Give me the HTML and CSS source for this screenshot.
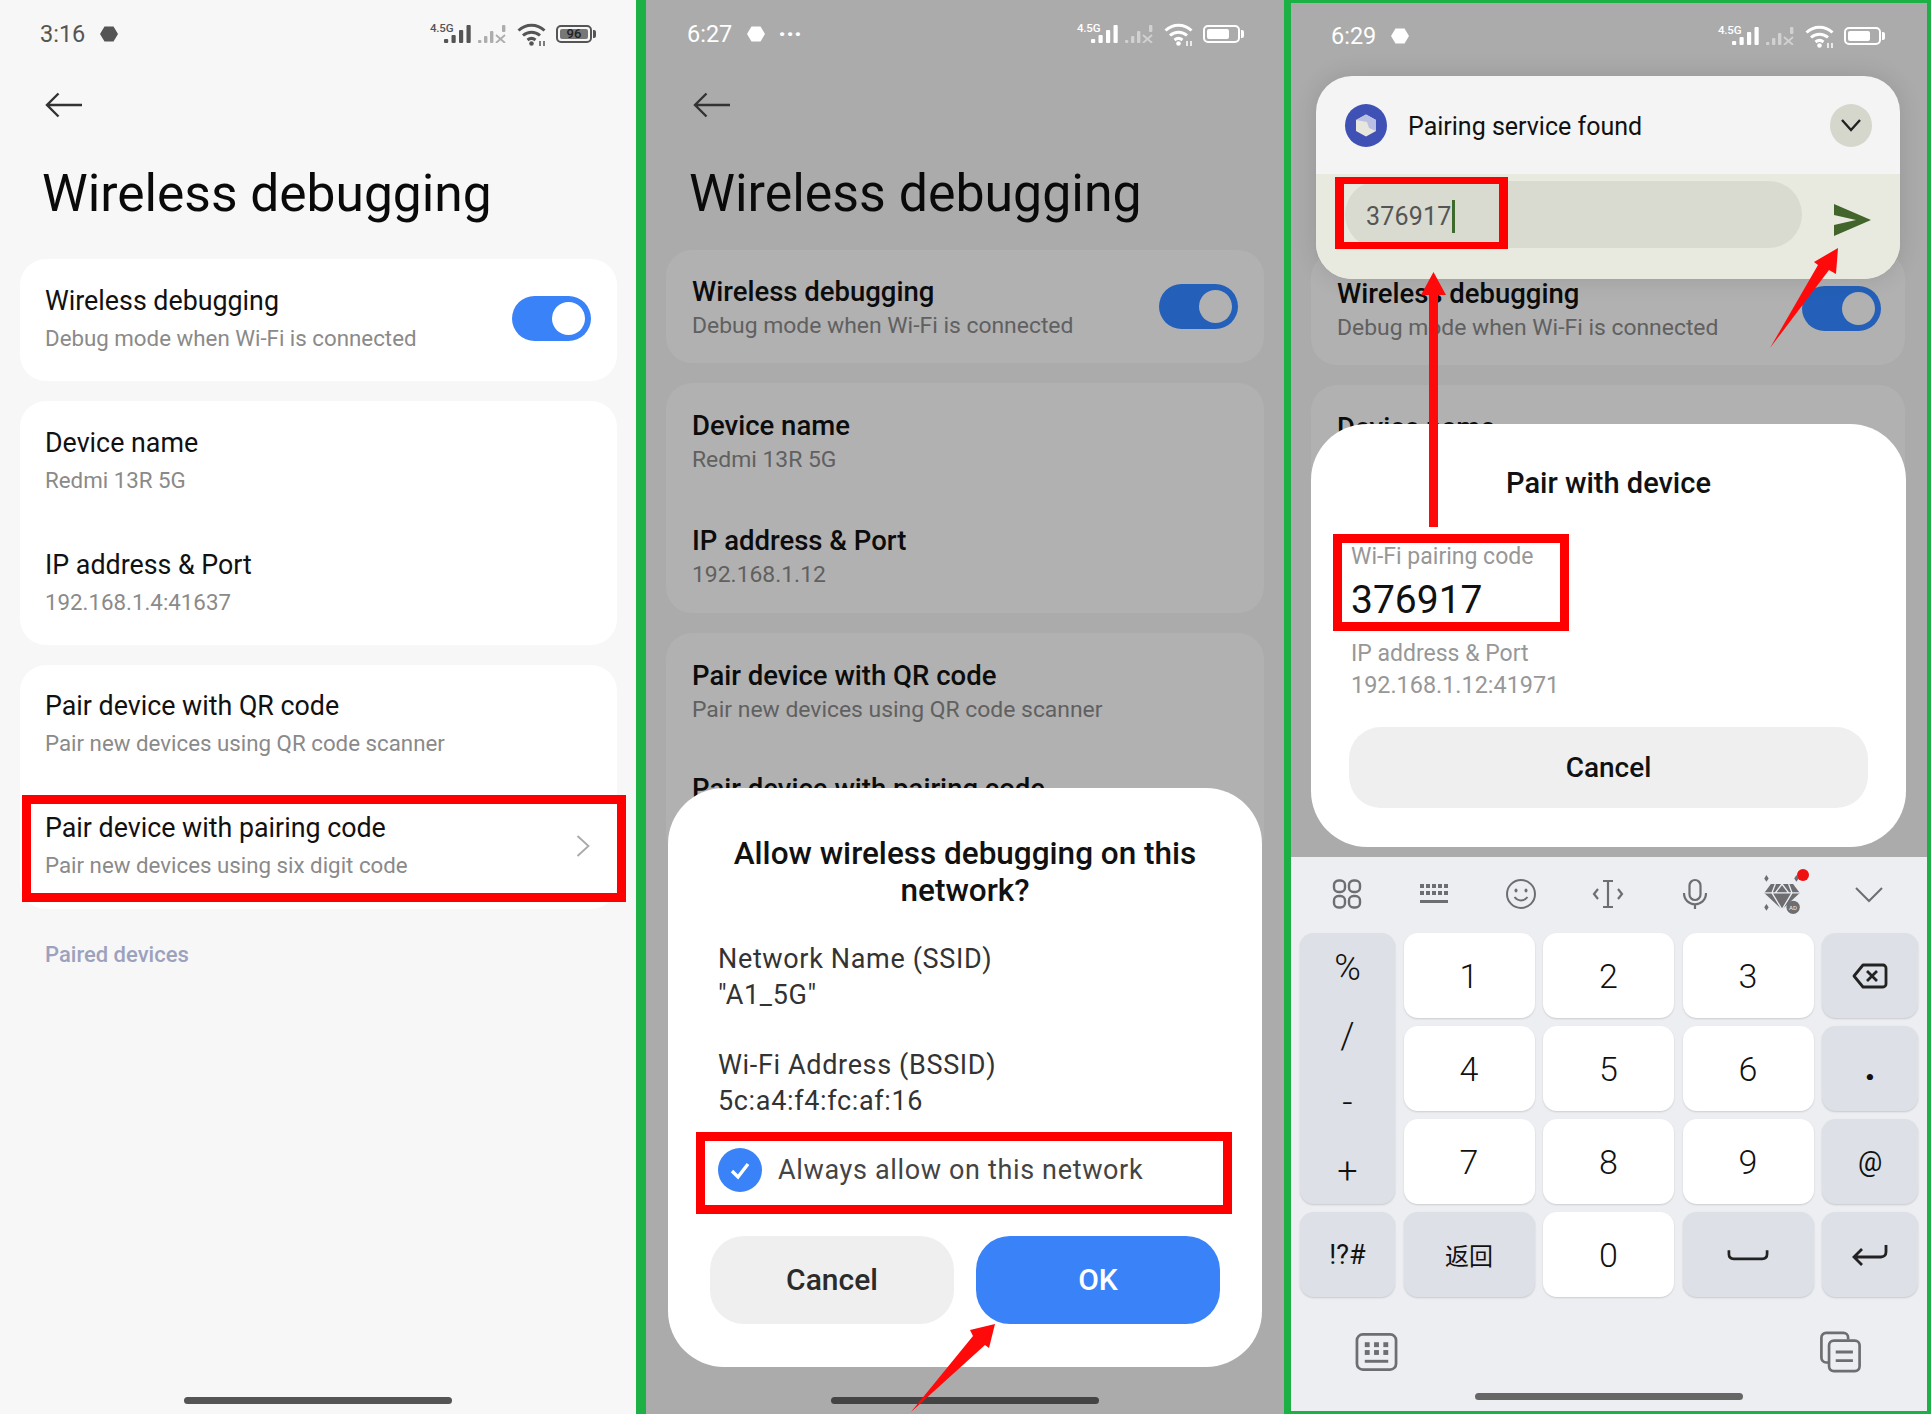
FILE: index.html
```html
<!DOCTYPE html>
<html lang="en">
<head>
<meta charset="utf-8">
<title>Wireless debugging</title>
<link rel="stylesheet" href="styles.css">
</head>
<body>
<svg class="defs" aria-hidden="true">
  <defs>
    <symbol id="sig" viewBox="0 0 28 18"><rect x="0" y="14" width="4.200" height="4" rx="1"/><rect x="7.500" y="10" width="4.200" height="8" rx="1"/><rect x="15" y="5" width="4.200" height="13" rx="1"/><rect x="22.500" y="0" width="4.200" height="18" rx="1"/></symbol>
    <symbol id="sigx" viewBox="0 0 29 18"><rect x="0" y="15" width="3.400" height="3" rx="1"/><rect x="6" y="11" width="3.400" height="7" rx="1"/><rect x="12" y="6" width="3.400" height="12" rx="1"/><rect x="24" y="0" width="3.400" height="7" rx="1"/><path d="M18 10l9 8M27 10l-9 8" fill="none" stroke="currentColor" stroke-width="1.800"/></symbol>
    <symbol id="wifi" viewBox="0 0 30 23"><g fill="none" stroke="currentColor" stroke-width="3"><path d="M1.500 7.500C9 .5 20 .5 27.500 7.500"/><path d="M6 12.500c5-4.500 12-4.500 17 0"/><path d="M10.500 17c2.500-2 5.500-2 8 0"/></g><circle cx="14.500" cy="20.500" r="2.300"/><path d="M23 23v-5M27 23v-5" stroke="currentColor" stroke-width="1.500"/></symbol>
    <symbol id="hex" viewBox="0 0 18 16"><path d="M4.500 .5h9L18 8l-4.500 7.500h-9L0 8z"/></symbol>
    <symbol id="back" viewBox="0 0 38 26"><path d="M37 13H2M13.500 1.500L2 13l11.500 11.500" fill="none" stroke="currentColor" stroke-width="2.400"/></symbol>
  </defs>
</svg>

<main class="screens">
  <!-- Screen 1 -->
  <section class="phone phone-light">
    <header class="status">
      <span class="clock">3:16</span>
      <svg class="hex"><use href="#hex"/></svg>
      <div class="net">
        <span class="g">4.5G</span>
        <svg class="sig"><use href="#sig"/></svg>
        <svg class="sigx"><use href="#sigx"/></svg>
        <svg class="wifi"><use href="#wifi"/></svg>
        <span class="batt batt-full"><span class="batt-level">96</span></span>
      </div>
    </header>
    <svg class="back"><use href="#back"/></svg>
    <h1 class="title">Wireless debugging</h1>
    <div class="cards">
      <div class="card">
        <div class="row">
          <div class="row-text"><div class="row-title">Wireless debugging</div><div class="row-sub">Debug mode when Wi-Fi is connected</div></div>
          <span class="toggle"></span>
        </div>
      </div>
      <div class="card">
        <div class="row"><div class="row-text"><div class="row-title">Device name</div><div class="row-sub">Redmi 13R 5G</div></div></div>
        <div class="row"><div class="row-text"><div class="row-title">IP address &amp; Port</div><div class="row-sub">192.168.1.4:41637</div></div></div>
      </div>
      <div class="card card-short">
        <div class="row"><div class="row-text"><div class="row-title">Pair device with QR code</div><div class="row-sub">Pair new devices using QR code scanner</div></div></div>
        <div class="row">
          <div class="row-text"><div class="row-title">Pair device with pairing code</div><div class="row-sub">Pair new devices using six digit code</div></div>
          <svg class="chev" viewBox="0 0 14 22"><path d="M1.500 1L12.500 11 1.500 21" fill="none" stroke="#a9a9a9" stroke-width="1.800"/></svg>
        </div>
      </div>
    </div>
    <div class="paired">Paired devices</div>
    <div class="homebar"></div>
    <div class="redbox red-pair"></div>
  </section>

  <!-- Screen 2 -->
  <section class="phone phone-dim">
    <header class="status">
      <span class="clock">6:27</span>
      <svg class="hex"><use href="#hex"/></svg>
      <span class="dots">···</span>
      <div class="net">
        <span class="g">4.5G</span>
        <svg class="sig"><use href="#sig"/></svg>
        <svg class="sigx"><use href="#sigx"/></svg>
        <svg class="wifi"><use href="#wifi"/></svg>
        <span class="batt"><span class="batt-fill"></span></span>
      </div>
    </header>
    <svg class="back"><use href="#back"/></svg>
    <h1 class="title">Wireless debugging</h1>
    <div class="cards">
      <div class="card">
        <div class="row">
          <div class="row-text"><div class="row-title">Wireless debugging</div><div class="row-sub">Debug mode when Wi-Fi is connected</div></div>
          <span class="toggle"></span>
        </div>
      </div>
      <div class="card">
        <div class="row"><div class="row-text"><div class="row-title">Device name</div><div class="row-sub">Redmi 13R 5G</div></div></div>
        <div class="row"><div class="row-text"><div class="row-title">IP address &amp; Port</div><div class="row-sub">192.168.1.12</div></div></div>
      </div>
      <div class="card">
        <div class="row"><div class="row-text"><div class="row-title">Pair device with QR code</div><div class="row-sub">Pair new devices using QR code scanner</div></div></div>
        <div class="row row-clip"><div class="row-text"><div class="row-title">Pair device with pairing code</div><div class="row-sub">Pair new devices using six digit code</div></div></div>
      </div>
    </div>
    <div class="homebar"></div>

    <div class="dialog dialog-allow">
      <h2 class="dlg-title">Allow wireless debugging on this network?</h2>
      <div class="info">Network Name (SSID)<br>"A1_5G"</div>
      <div class="info info-next">Wi-Fi Address (BSSID)<br>5c:a4:f4:fc:af:16</div>
      <div class="always">
        <svg class="check" viewBox="0 0 44 44"><circle cx="22" cy="22" r="22" fill="#3a82f7"/><path d="M14 23l6 6 10-13" fill="none" stroke="#fff" stroke-width="3.400"/></svg>
        <span>Always allow on this network</span>
      </div>
      <div class="btns">
        <button class="btn">Cancel</button>
        <button class="btn btn-ok">OK</button>
      </div>
    </div>
    <div class="redbox red-always"></div>
    <svg class="arrow arrow-ok" viewBox="0 0 104 100"><polygon points="94,10 69,16 72,22 10,98 84,31 88,34"/></svg>
  </section>

  <!-- Screen 3 -->
  <section class="phone phone-dim phone-input">
    <div class="upper">
      <header class="status">
        <span class="clock">6:29</span>
        <svg class="hex"><use href="#hex"/></svg>
        <div class="net">
          <span class="g">4.5G</span>
          <svg class="sig"><use href="#sig"/></svg>
          <svg class="sigx"><use href="#sigx"/></svg>
          <svg class="wifi"><use href="#wifi"/></svg>
          <span class="batt"><span class="batt-fill"></span></span>
        </div>
      </header>
      <div class="cards">
        <div class="card">
          <div class="row">
            <div class="row-text"><div class="row-title">Wireless debugging</div><div class="row-sub">Debug mode when Wi-Fi is connected</div></div>
            <span class="toggle"></span>
          </div>
        </div>
        <div class="card">
          <div class="row"><div class="row-text"><div class="row-title">Device name</div><div class="row-sub">Redmi 13R 5G</div></div></div>
        </div>
      </div>
    </div>

    <div class="keyboard">
      <div class="kb-tools">
        <svg class="tool" viewBox="0 0 32 32"><g fill="none" stroke="#6e6e70" stroke-width="2.400"><rect x="3" y="2.500" width="11" height="11.500" rx="4.500"/><rect x="18" y="2.500" width="11" height="11.500" rx="4.500"/><rect x="3" y="18" width="11" height="11.500" rx="4.500"/><rect x="18" y="18" width="11" height="11.500" rx="4.500"/></g></svg>
        <svg class="tool" viewBox="0 0 32 32" fill="#6e6e70"><rect x="2" y="6" width="4" height="4"/><rect x="8" y="6" width="4" height="4"/><rect x="14" y="6" width="4" height="4"/><rect x="20" y="6" width="4" height="4"/><rect x="26" y="6" width="4" height="4"/><rect x="2" y="13" width="4" height="4"/><rect x="8" y="13" width="4" height="4"/><rect x="14" y="13" width="4" height="4"/><rect x="20" y="13" width="4" height="4"/><rect x="26" y="13" width="4" height="4"/><rect x="2" y="22" width="28" height="3"/></svg>
        <svg class="tool" viewBox="0 0 32 32"><circle cx="16" cy="16" r="14" fill="none" stroke="#6e6e70" stroke-width="2"/><ellipse cx="11" cy="12.500" rx="1.500" ry="2" fill="#6e6e70"/><ellipse cx="21" cy="12.500" rx="1.500" ry="2" fill="#6e6e70"/><path d="M9.500 19c3.500 4.500 9.500 4.500 13 0" fill="none" stroke="#6e6e70" stroke-width="2"/></svg>
        <svg class="tool" viewBox="0 0 32 32"><path d="M11 3h10M11 29h10M16 3v26M6 11l-4 5 4 5M26 11l4 5-4 5" fill="none" stroke="#6e6e70" stroke-width="2.200"/></svg>
        <svg class="tool" viewBox="0 0 32 32"><rect x="10.500" y="2" width="11" height="20" rx="5.500" fill="none" stroke="#6e6e70" stroke-width="2.200"/><path d="M5 15c0 15 22 15 22 0M16 26v5" fill="none" stroke="#6e6e70" stroke-width="2.200"/></svg>
        <span class="gem">
          <svg class="tool" viewBox="0 0 36 36"><path d="M8 9h20l6 8-16 15L2 17z" fill="#6e6e70"/><path d="M2 17h32M12 9l-3 8 9 15 9-15-3-8M18 9l-6 8M18 9l6 8" fill="none" stroke="#eceef2" stroke-width="1.200"/><path d="M4 1l2 3-2 3-2-3zM31 1l2 3-2 3-2-3zM4 27l2 3-2 3-2-3z" fill="#6e6e70"/><circle cx="28" cy="30" r="6" fill="#6e6e70"/><text x="28" y="32" font-size="5.500" text-anchor="middle" fill="#eceef2" font-family="Roboto, sans-serif">AD</text></svg>
          <span class="gem-dot"></span>
        </span>
        <svg class="tool" viewBox="0 0 32 32"><path d="M3 10l13 13 13-13" fill="none" stroke="#6e6e70" stroke-width="2"/></svg>
      </div>
      <div class="keys">
        <div class="key fn sym-col"><span>%</span><span>/</span><span>-</span><span>+</span></div>
        <div class="key">1</div><div class="key">2</div><div class="key">3</div>
        <div class="key fn"><svg class="ki ki-del" viewBox="0 0 36 26"><path d="M11 2h20a3 3 0 0 1 3 3v16a3 3 0 0 1-3 3H11L2 13z" fill="none" stroke="#222" stroke-width="2.800" stroke-linejoin="round"/><path d="M15 8l10 10M25 8L15 18" stroke="#222" stroke-width="2.800"/></svg></div>
        <div class="key">4</div><div class="key">5</div><div class="key">6</div>
        <div class="key fn fn-dot">.</div>
        <div class="key">7</div><div class="key">8</div><div class="key">9</div>
        <div class="key fn fn-small">@</div>
        <div class="key fn fn-small">!?#</div>
        <div class="key fn fn-cjk">返回</div>
        <div class="key">0</div>
        <div class="key fn"><svg class="ki ki-space" viewBox="0 0 44 14"><path d="M2 2v4c0 3 2 5 5 5h30c3 0 5-2 5-5V2" fill="none" stroke="#222" stroke-width="2.800"/></svg></div>
        <div class="key fn"><svg class="ki" viewBox="0 0 36 24"><path d="M34 2v7c0 3-2 5-5 5H3M10 6l-8 8 8 8" fill="none" stroke="#222" stroke-width="2.800"/></svg></div>
      </div>
      <div class="kb-bottom">
        <svg class="bottom-ic" viewBox="0 0 44 40"><rect x="2" y="2" width="40" height="36" rx="6" fill="none" stroke="#6e6e70" stroke-width="2.800"/><g fill="#6e6e70"><rect x="10" y="10" width="5" height="5"/><rect x="19.500" y="10" width="5" height="5"/><rect x="29" y="10" width="5" height="5"/><rect x="10" y="18" width="5" height="5"/><rect x="19.500" y="18" width="5" height="5"/><rect x="29" y="18" width="5" height="5"/><rect x="10" y="28" width="24" height="3"/></g></svg>
        <svg class="bottom-ic" viewBox="0 0 44 44"><path d="M9 33H7a5 5 0 0 1-5-5V7a5 5 0 0 1 5-5h18a5 5 0 0 1 5 5v2" fill="none" stroke="#6e6e70" stroke-width="2.800"/><rect x="10" y="10" width="32" height="32" rx="5" fill="none" stroke="#6e6e70" stroke-width="2.800"/><path d="M17 22h18M17 31h18" stroke="#6e6e70" stroke-width="3"/></svg>
      </div>
      <div class="homebar"></div>
    </div>

    <div class="notif">
      <div class="notif-head">
        <span class="notif-app"><svg viewBox="0 0 42 42"><path d="M21 10l10 5.500v11L21 32l-10-5.500v-11z" fill="#e7e7dd"/><path d="M21 10l10 5.500v11l-7-3-2-6-11-2z" fill="#b9c0e4"/></svg></span>
        <span class="notif-title">Pairing service found</span>
        <span class="notif-exp"><svg viewBox="0 0 24 16"><path d="M3 3l9 10 9-10" fill="none" stroke="#222" stroke-width="2.400"/></svg></span>
      </div>
      <div class="notif-body">
        <div class="pill"><span class="pill-text">376917</span><span class="caret"></span></div>
        <svg class="send" viewBox="0 0 37 32"><path d="M0 0l37 16L0 32V21l22-5L0 11z" fill="#41652b"/></svg>
      </div>
    </div>

    <div class="dialog dialog-pair">
      <h2 class="dlg-title">Pair with device</h2>
      <div class="pf-label pf-code-label">Wi-Fi pairing code</div>
      <div class="pf-code">376917</div>
      <div class="pf-label pf-ip">IP address &amp; Port</div>
      <div class="pf-label pf-addr">192.168.1.12:41971</div>
      <button class="btn btn-wide">Cancel</button>
    </div>

    <div class="redbox red-input"></div>
    <div class="redbox red-code"></div>
    <svg class="arrow arrow-up" viewBox="0 0 40 265"><polygon points="18.500,7 31,30 23,30 23,262 14,262 14,30 6,30"/></svg>
    <svg class="arrow arrow-send" viewBox="0 0 90 115"><polygon points="78,8 54,22 58,25 10,108 69,30 76,34"/></svg>
  </section>
</main>
</body>
</html>
```
FILE: styles.css
```css
* { box-sizing: border-box; }
html, body { margin: 0; padding: 0; }
body { width: 1931px; height: 1414px; overflow: hidden; background: #1db045; font-family: Roboto, "Noto Sans", sans-serif; color: #111; }
.defs { position: absolute; width: 0; height: 0; }
h1, h2 { margin: 0; font-weight: 400; }

.screens { display: flex; height: 1414px; }

.phone { position: relative; display: flex; flex-direction: column; overflow: hidden; height: 100%; flex: none; }
.phone-light { width: 636px; margin-right: 10px; background: #f7f7f7; color: #111; }
.phone-dim { width: 638px; margin-right: 7px; background: #ababab; color: #0c0c0c; }
.phone-input { width: 636px; margin: 3px 0; height: 1408px; }

/* status bar */
.status { display: flex; align-items: center; height: 68px; padding: 0 39px 0 40px; flex: none; color: #555; }
.phone-dim .status { color: #fff; padding: 0 44px 0 41px; }
.phone-input .status { height: 66px; padding: 0 46px 0 40px; }
.clock { font-size: 23.500px; line-height: 30px; }
.hex { width: 18px; height: 16px; margin-left: 15px; fill: currentColor; }
.dots { margin-left: 13px; font-size: 26px; line-height: 20px; font-weight: 700; letter-spacing: 0; }
.net { display: flex; align-items: center; margin-left: auto; position: relative; }
.g { position: absolute; left: -14px; top: -1px; font-size: 11.500px; line-height: 12px; font-weight: 500; letter-spacing: -.2px; }
.sig { width: 28px; height: 18px; fill: currentColor; }
.sigx { width: 29px; height: 18px; margin-left: 6px; fill: currentColor; opacity: .45; color: inherit; }
.wifi { width: 30px; height: 23px; margin-left: 10px; fill: currentColor; }
.batt { position: relative; display: flex; align-items: center; width: 37px; height: 18px; margin-left: 9px; padding: 2px; border: 2px solid currentColor; border-radius: 5px; }
.batt::after { content: ""; position: absolute; right: -6px; top: 3px; width: 3px; height: 8px; border-radius: 0 2px 2px 0; background: currentColor; }
.batt-fill { display: block; width: 22px; height: 100%; border-radius: 2px; background: currentColor; }
.batt-level { display: block; width: 100%; height: 100%; border-radius: 2px; background: #777; color: #222; font-size: 13px; line-height: 10px; text-align: center; font-weight: 500; }
.batt-full { width: 36px; margin-right: 5px; }

.back { display: block; width: 38px; height: 26px; margin: 24px 0 0 45px; color: #333; flex: none; }
.phone-dim .back { margin-left: 47px; color: #333; }

.title { margin: 46px 0 0 42px; font-size: 51.500px; line-height: 60px; color: #0a0a0a; flex: none; }
.phone-dim .title { margin-left: 43px; font-size: 51.850px; }

/* cards */
.cards { display: flex; flex-direction: column; gap: 20px; margin: 35px 19px 0 20px; flex: none; }
.phone-dim .cards { margin: 26px 20px 0; }
.phone-input .cards { margin: 183px 22px 0 20px; }
.card { background: #fff; border-radius: 26px; }
.phone-dim .card { background: #b1b1b1; }
.row { display: flex; align-items: center; justify-content: space-between; height: 122px; padding: 0 26px 3px 25px; }
.card-short .row { padding-bottom: 5px; }
.phone-dim .row { height: 113px; padding: 2.500px 26px 0 26px; }
.phone-input .row { padding-right: 24px; }
.phone-dim .card + .card .row { height: 115px; }
.phone-dim .card + .card .row-clip { height: 112px; }
.row-title { font-size: 26.800px; line-height: 36px; color: #111; }
.row-sub { margin-top: 3px; font-size: 22.300px; line-height: 32px; color: #8a8a8a; }
.phone-dim .row-title { font-size: 27.500px; font-weight: 500; line-height: 34px; color: #0c0c0c; }
.phone-dim .row-sub { margin-top: 2.500px; font-size: 22.900px; line-height: 30px; color: #606060; }

.toggle { position: relative; display: block; width: 79px; height: 45px; border-radius: 23px; background: #3a82f7; flex: none; }
.toggle::after { content: ""; position: absolute; right: 6px; top: 6px; width: 33px; height: 33px; border-radius: 50%; background: #fff; }
.phone-dim .toggle { margin-top: -2.500px; background: #2460b9; }
.phone-dim .toggle::after { background: #b1b1b1; }

.chev { width: 14px; height: 22px; flex: none; margin-right: 1px; }

.paired { margin: 30px 0 0 45px; font-size: 22px; line-height: 32px; font-weight: 500; color: #9ca1bd; flex: none; }

.homebar { width: 268px; height: 7px; border-radius: 4px; background: #555; margin: auto auto 10px; flex: none; }
.phone-dim > .homebar { background: #444; }

/* dialogs */
.dialog { position: absolute; background: #fff; border-radius: 56px; color: #111; display: flex; flex-direction: column; }
.dialog-allow { left: 22px; top: 788px; width: 594px; height: 579px; padding: 47px 42px 43px; }
.dlg-title { font-size: 29px; line-height: 37px; font-weight: 500; text-align: center; color: #111; }
.dialog-allow .dlg-title { font-size: 31.500px; }
.info { margin: 32px 0 0 8px; font-size: 27px; line-height: 36px; color: #333; letter-spacing: .65px; }
.info-next { margin-top: 34px; }
.always { display: flex; align-items: center; gap: 16px; margin: 29px 0 0 8px; font-size: 27px; line-height: 44px; color: #444; letter-spacing: .65px; }
.check { width: 44px; height: 44px; flex: none; }
.btns { display: flex; gap: 22px; margin-top: auto; }
.btn { flex: 1; height: 88px; border: 0; border-radius: 34px; background: #efefef; color: #2b2b2b; font: 500 30px/1 Roboto, sans-serif; }
.btn-ok { background: #3a82f7; color: #fff; }
.dialog-pair { left: 20px; top: 421px; width: 595px; height: 423px; padding: 41px 38px 39px; }
.pf-label { padding-left: 2px; font-size: 23px; line-height: 30px; color: #979797; }
.pf-addr { font-size: 23.400px; }
.pf-code-label { margin-top: 40px; }
.pf-code { margin-top: 5px; padding-left: 2px; font-size: 39px; line-height: 46px; color: #111; }
.pf-ip { margin-top: 16px; margin-bottom: 1px; }
.btn-wide { flex: none; height: 81px; margin-top: 27px; border-radius: 32px; color: #111; font-size: 28px; }

/* notification */
.upper { flex: 1; min-height: 0; overflow: hidden; }
.notif { position: absolute; left: 25px; top: 73px; width: 584px; height: 203px; border-radius: 36px; overflow: hidden; background: #f4f4f4; box-shadow: 0 0 24px rgba(0,0,0,.12); }
.notif-head { display: flex; align-items: center; height: 98px; padding: 0 28px 0 29px; }
.notif-app { display: block; width: 42px; height: 43px; border-radius: 50%; background: #3f51b5; flex: none; }
.notif-app svg { display: block; width: 100%; height: 100%; }
.notif-title { margin: 3px 0 0 21px; font-size: 25px; line-height: 34px; color: #111; }
.notif-exp { display: flex; align-items: center; justify-content: center; width: 42px; height: 43px; margin-left: auto; border-radius: 50%; background: #d5d6cc; flex: none; }
.notif-exp svg { width: 24px; height: 16px; }
.notif-body { display: flex; align-items: flex-start; height: 105px; padding: 7px 0 0 29px; background: #e8e9df; }
.pill { display: flex; align-items: center; width: 457px; height: 67px; padding-left: 21px; border-radius: 34px; background: #d9dbd1; }
.pill-text { margin-top: 4px; font-size: 25px; line-height: 34px; color: #555; letter-spacing: .2px; }
.caret { display: block; width: 3px; height: 33px; margin-top: 3px; background: #3f6a2e; }
.send { width: 37px; height: 32px; margin: 23px 0 0 32px; flex: none; }

/* keyboard */
.keyboard { display: flex; flex-direction: column; height: 554px; background: #eceef2; flex: none; position: relative; }
.kb-tools { display: grid; grid-template-columns: repeat(7, 87px); justify-items: center; align-items: center; height: 76px; padding: 0 0 3px 12px; }
.tool { display: block; width: 32px; height: 32px; }
.gem { position: relative; display: block; width: 40px; height: 40px; }
.gem .tool { width: 40px; height: 40px; }
.gem-dot { position: absolute; right: -7px; top: -5px; width: 12px; height: 12px; border-radius: 50%; background: #f01010; }
.keys { display: grid; grid-template-columns: 95px 131px 131px 131px 96px; grid-auto-rows: 85px; column-gap: 8.500px; row-gap: 8px; padding-left: 9px; }
.key { display: flex; align-items: center; justify-content: center; border-radius: 14px; background: #fff; box-shadow: 0 1px 2px rgba(0,0,0,.14); font-size: 34px; font-weight: 300; color: #111; }
.key.fn { background: #dde0e6; box-shadow: 0 1px 2px rgba(0,0,0,.16); }
.sym-col { grid-row: span 3; flex-direction: column; justify-content: flex-start; padding-top: 15px; font-size: 36px; }
.sym-col span { display: block; flex: none; height: 67.500px; line-height: 40px; }
.fn-dot { font-weight: 700; font-size: 40px; padding-bottom: 4px; }
.fn-small { font-size: 27px; font-weight: 400; }
.fn-cjk { font-family: "Noto Sans CJK SC", sans-serif; font-size: 24px; font-weight: 400; }
.ki { display: block; width: 36px; height: 26px; }
.ki-space { width: 42px; height: 14px; }
.kb-bottom { display: flex; justify-content: space-between; align-items: center; padding: 33px 65px 0 64px; height: 76px; flex: none; }
.bottom-ic { display: block; width: 43px; height: 42px; }
.keyboard .homebar { background: #666; margin: auto auto 11px; }

/* annotations */
.redbox { position: absolute; border: 9px solid #ff0000; }
.red-pair { left: 22px; top: 795px; width: 604px; height: 107px; }
.red-always { left: 50px; top: 1132px; width: 536px; height: 82px; }
.red-input { left: 44px; top: 174px; width: 173px; height: 72px; border-width: 7px 9px; }
.red-code { left: 42px; top: 531px; width: 236px; height: 97px; }
.arrow { position: absolute; fill: #ff0a0a; }
.arrow-ok { left: 255px; top: 1314px; width: 104px; height: 100px; }
.arrow-up { left: 124px; top: 262px; width: 40px; height: 265px; }
.arrow-send { left: 469px; top: 237px; width: 90px; height: 115px; }
```
